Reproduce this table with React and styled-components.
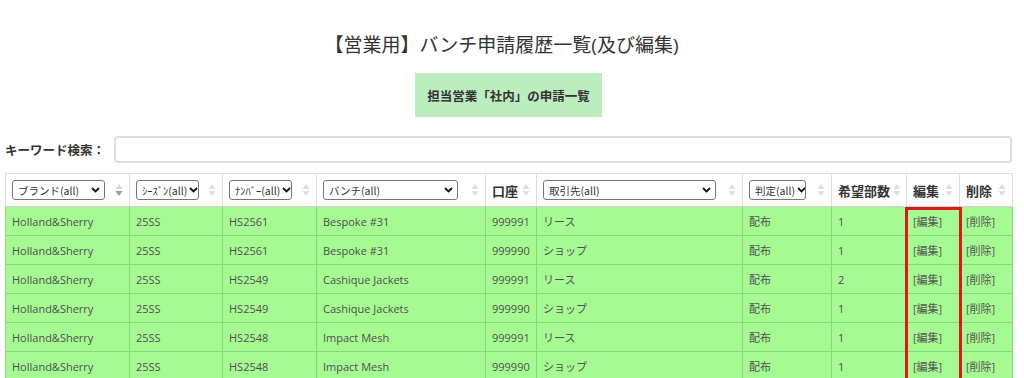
import React from 'react';
import styled, { createGlobalStyle } from "styled-components";

const GlobalStyle = createGlobalStyle`
body {
  margin: 0;
  background: #fff;
  font-family: "Open Sans", "Noto Sans CJK JP", sans-serif;
  color: #444;
}
`

const Page = styled.div`
padding: 31px 12px 0 5px;
display: flex;
flex-direction: column;
align-items: center;
`

const Title = styled.h1`
font-size: 19px;
line-height: 28px;
font-weight: 400;
color: #333;
margin: 0 14px 0 0;
`

const Owner = styled.div`
margin-top: 14px;
background: #bbedbf;
height: 44px;
padding: 0 12px;
display: flex;
align-items: center;
font-size: 12.5px;
font-weight: 700;
color: #333;
`

const SearchRow = styled.div`
align-self: stretch;
margin-top: 19px;
display: flex;
align-items: center;
gap: 9px;
`

const SearchLabel = styled.label`
font-size: 12.5px;
font-weight: 700;
color: #333;
white-space: nowrap;
`

const SearchInput = styled.input`
flex: 1;
height: 27px;
box-sizing: border-box;
border: 2px solid #ddd;
border-radius: 4px;
outline: none;
`

const TableWrap = styled.div`
align-self: stretch;
margin-top: 10px;
position: relative;
`

const Table = styled.table`
width: 100%;
table-layout: fixed;
border-collapse: collapse;
font-size: 11px;
`

const Th = styled.th`
height: 32px;
padding: 0 6px 0 6px;
border: 1px solid #ddd;
border-bottom: 1px solid #cfcfcf;
background: #fff;
text-align: left;
font-size: 13px;
font-weight: 700;
color: #333;
white-space: nowrap;
overflow: hidden;
`

const HeadInner = styled.div`
display: flex;
align-items: center;
justify-content: space-between;
gap: 3px;
`

const Picker = styled.div`
width: ${p => p.$w}px;
height: 20px;
box-sizing: border-box;
flex: none;
display: flex;
align-items: center;
justify-content: space-between;
gap: 2px;
padding: 0 4px 0 5px;
font-family: "Noto Sans CJK JP", "Open Sans", sans-serif;
font-size: 10.5px;
font-weight: 400;
color: #333;
background: #fff;
border: 1px solid #767676;
border-radius: 3px;
white-space: nowrap;
overflow: hidden;
`

const Td = styled.td`
height: 28px;
padding: 0 6px;
border: 1px solid #8dd67f;
background: #a5fa92;
color: #505050;
white-space: nowrap;
overflow: hidden;
`

const Link = styled.span`
color: #555;
`

const Highlight = styled.div`
position: absolute;
left: 900px;
top: 34px;
width: 51px;
height: 180px;
border: 3px solid #e0161e;
pointer-events: none;
`

const SortIcon = ({ active }) => (
  <svg width="8" height="14" viewBox="0 0 8 14" style={{ flex: "none" }}>
    <path d="M4 1 L7.5 6 H0.5 Z" fill={active ? "#d8d8d8" : "#dedede"} />
    <path d="M4 13 L7.5 8 H0.5 Z" fill={active ? "#9a9a9a" : "#dedede"} />
  </svg>
)

const Chevron = () => (
  <svg width="9" height="6" viewBox="0 0 9 6" style={{ flex: "none" }}>
    <path d="M1 1 L4.5 4.5 L8 1" fill="none" stroke="#111" strokeWidth="1.8" />
  </svg>
)

const cols = [124, 93, 94, 169, 51, 206, 89, 75, 53, 53]

const headers = [
  { sel: "ブランド(all)", w: 93, active: true },
  { sel: "ｼｰｽﾞﾝ(all)", w: 63 },
  { sel: "ﾅﾝﾊﾞｰ(all)", w: 63 },
  { sel: "バンチ(all)", w: 135 },
  { label: "口座" },
  { sel: "取引先(all)", w: 173 },
  { sel: "判定(all)", w: 57 },
  { label: "希望部数" },
  { label: "編集" },
  { label: "削除" },
]

const rows = [
  ["HS2561", "Bespoke #31", "999991", "リース", "1"],
  ["HS2561", "Bespoke #31", "999990", "ショップ", "1"],
  ["HS2549", "Cashique Jackets", "999991", "リース", "2"],
  ["HS2549", "Cashique Jackets", "999990", "ショップ", "1"],
  ["HS2548", "Impact Mesh", "999991", "リース", "1"],
  ["HS2548", "Impact Mesh", "999990", "ショップ", "1"],
]

const App = () => {
  return (
    <>
      <GlobalStyle />
      <Page>
        <Title>【営業用】バンチ申請履歴一覧(及び編集)</Title>
        <Owner>担当営業「社内」の申請一覧</Owner>
        <SearchRow>
          <SearchLabel>キーワード検索：</SearchLabel>
          <SearchInput type="text" />
        </SearchRow>
        <TableWrap>
          <Table>
            <colgroup>
              {cols.map((w, i) => <col key={i} style={{ width: w }} />)}
            </colgroup>
            <thead>
              <tr>
                {headers.map((h, i) => (
                  <Th key={i}>
                    <HeadInner>
                      {h.sel
                        ? <Picker $w={h.w} role="combobox"><span>{h.sel}</span><Chevron /></Picker>
                        : <span>{h.label}</span>}
                      <SortIcon active={h.active} />
                    </HeadInner>
                  </Th>
                ))}
              </tr>
            </thead>
            <tbody>
              {rows.map((r, i) => (
                <tr key={i}>
                  <Td>Holland&amp;Sherry</Td>
                  <Td>25SS</Td>
                  <Td>{r[0]}</Td>
                  <Td>{r[1]}</Td>
                  <Td>{r[2]}</Td>
                  <Td>{r[3]}</Td>
                  <Td>配布</Td>
                  <Td>{r[4]}</Td>
                  <Td><Link>[編集]</Link></Td>
                  <Td><Link>[削除]</Link></Td>
                </tr>
              ))}
            </tbody>
          </Table>
          <Highlight />
        </TableWrap>
      </Page>
    </>
  )
}

export default App
